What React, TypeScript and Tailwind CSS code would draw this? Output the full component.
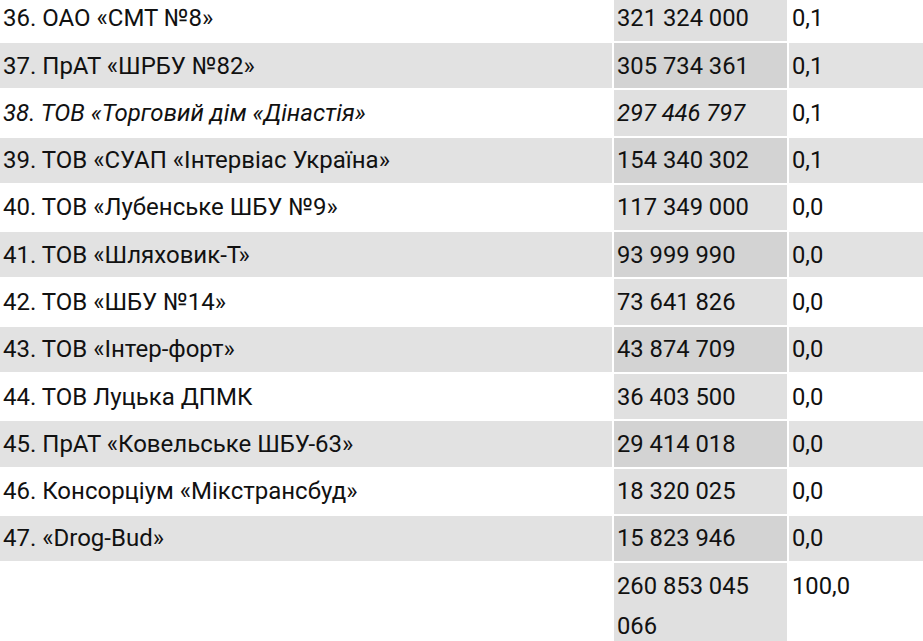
import React from "react";

type Row = { name: string; value: string; pct: string; italic?: boolean };

const rows: Row[] = [
  { name: "36. ОАО «СМТ №8»", value: "321 324 000", pct: "0,1" },
  { name: "37. ПрАТ «ШРБУ №82»", value: "305 734 361", pct: "0,1" },
  { name: "38. ТОВ «Торговий дім «Дінастія»", value: "297 446 797", pct: "0,1", italic: true },
  { name: "39. ТОВ «СУАП «Інтервіас Україна»", value: "154 340 302", pct: "0,1" },
  { name: "40. ТОВ «Лубенське ШБУ №9»", value: "117 349 000", pct: "0,0" },
  { name: "41. ТОВ «Шляховик-Т»", value: "93 999 990", pct: "0,0" },
  { name: "42. ТОВ «ШБУ №14»", value: "73 641 826", pct: "0,0" },
  { name: "43. ТОВ «Інтер-форт»", value: "43 874 709", pct: "0,0" },
  { name: "44. ТОВ Луцька ДПМК", value: "36 403 500", pct: "0,0" },
  { name: "45. ПрАТ «Ковельське ШБУ-63»", value: "29 414 018", pct: "0,0" },
  { name: "46. Консорціум «Мікстрансбуд»", value: "18 320 025", pct: "0,0" },
  { name: "47. «Drog-Bud»", value: "15 823 946", pct: "0,0" },
];

export default function App() {
  return (
    <div className="w-[923px] h-[641px] overflow-hidden bg-white text-[#111] font-['Roboto',sans-serif]">
      <div className="grid grid-cols-[612px_173px_1fr] gap-[2px] -mt-[4.3px] text-[23.75px] leading-[40px]">
        {rows.map((r, i) => {
          const odd = i % 2 === 1;
          return (
            <React.Fragment key={i}>
              <div
                className={`pl-[3px] py-[2.65px] whitespace-nowrap text-[24px] ${
                  odd ? "bg-[#e2e2e2]" : "bg-white"
                } ${r.italic ? "italic" : ""}`}
              >
                {r.name}
              </div>
              <div
                className={`pl-[3px] py-[2.65px] ${
                  odd ? "bg-[#d3d3d3]" : "bg-[#e0e0e0]"
                } ${r.italic ? "italic" : ""}`}
              >
                {r.value}
              </div>
              <div className={`pl-[3px] py-[2.65px] ${odd ? "bg-[#e2e2e2]" : "bg-white"}`}>
                {r.pct}
              </div>
            </React.Fragment>
          );
        })}
        <div className="bg-white py-[2.65px]"></div>
        <div className="pl-[3px] py-[2.65px] bg-[#e0e0e0]">
          260 853 045
          <br />
          066
        </div>
        <div className="pl-[3px] py-[2.65px] bg-white">100,0</div>
      </div>
    </div>
  );
}
